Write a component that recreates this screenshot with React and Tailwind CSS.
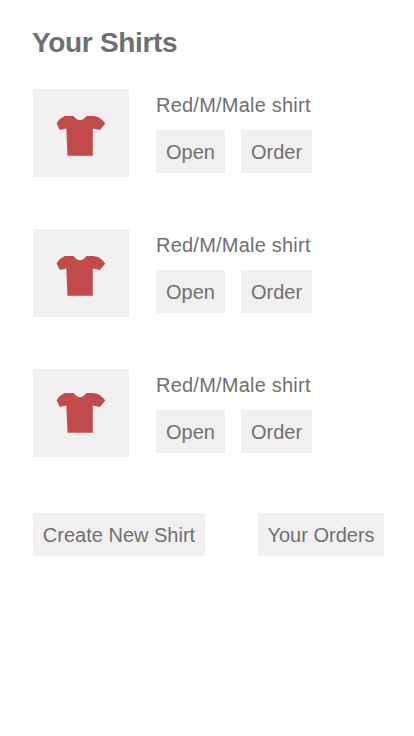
const font = "font-['Liberation_Sans',Arial,sans-serif]";

function Shirt({ lift }) {
  return (
    <div className={`flex h-[88px] w-24 bg-[#f2eff1] pl-[23px] ${lift ? 'pt-6' : 'pt-[27px]'}`}>
      <svg className="block h-10 w-[50px]" viewBox="-1 0 50 40" fill="#c14a4a">
        <path d="M8.3 0H16.5C18.5 2.5 20.5 4.3 23 4.3C25.6 4.3 27.5 2.5 29.5 0H36.5C42 1 43.5 2 48.3 7.4L42.8 14L35.8 12.4V39.8H10.5L9.3 12.6L2.8 14L-0.4 7.6C2.2 2.8 4.3 1.7 8.3 0Z" />
      </svg>
    </div>
  );
}

function Button({ children, className }) {
  return (
    <button className={`h-[43px] bg-[#f2eff1] text-[20px] whitespace-nowrap ${className}`}>{children}</button>
  );
}

function Row({ lift }) {
  return (
    <section className="flex h-[140px] gap-[27px]">
      <Shirt lift={lift} />
      <div>
        <p className="flex h-[41px] items-center pb-2.5 text-[20px] tracking-[0.22px] whitespace-nowrap">Red/M/Male shirt</p>
        <div className="flex gap-4">
          <Button className="w-[69px]">Open</Button>
          <Button className="w-[71px]">Order</Button>
        </div>
      </div>
    </section>
  );
}

export default function App() {
  return (
    <main className={`h-[736px] w-[414px] bg-white pl-[33px] text-[#707070] ${font}`}>
      <h1 className="-ml-px flex h-[89px] items-center pb-1 text-[28px] font-bold tracking-[-0.32px]">Your Shirts</h1>
      <Row />
      <Row />
      <Row lift />
      <div className="flex gap-[53px] pt-1">
        <Button className="w-[172px]">Create New Shirt</Button>
        <Button className="w-[126px]">Your Orders</Button>
      </div>
    </main>
  );
}
